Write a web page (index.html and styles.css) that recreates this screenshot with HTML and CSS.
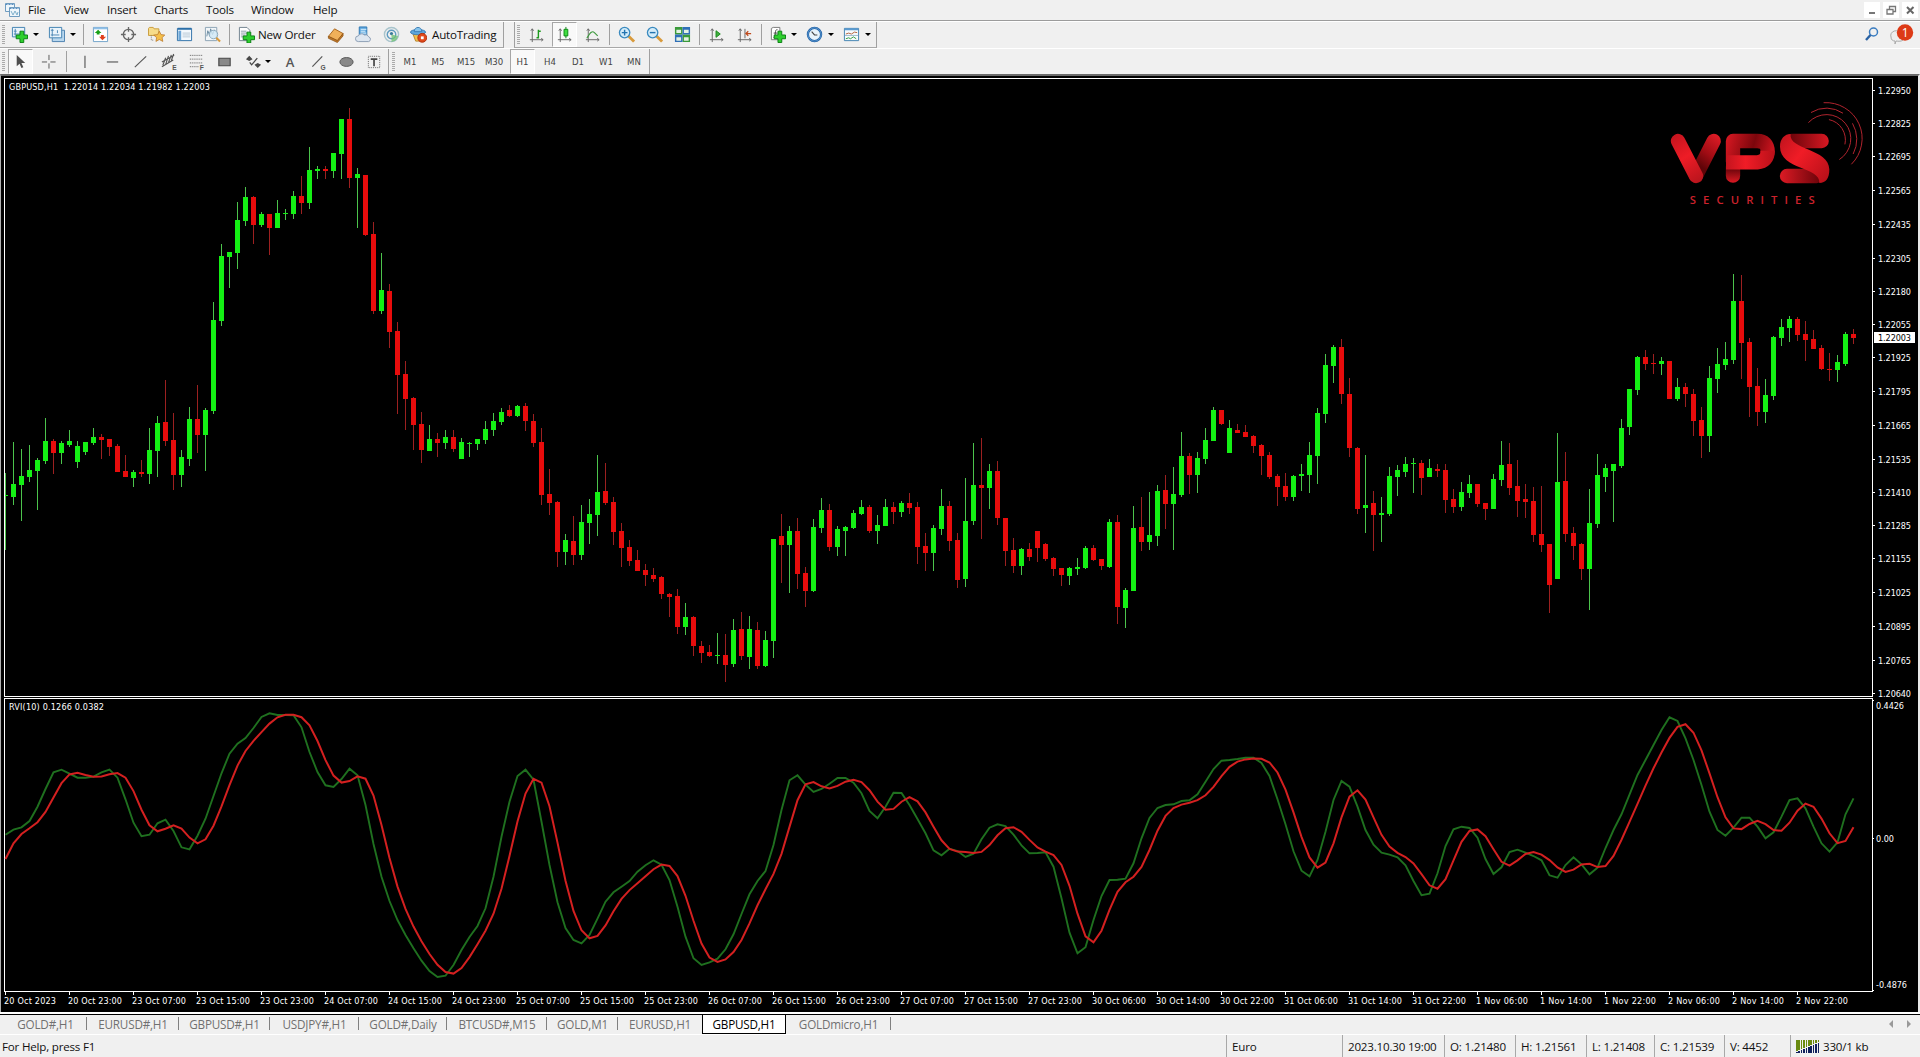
FILE: index.html
```html
<!DOCTYPE html>
<html lang="en">
<head>
  <meta charset="UTF-8">
  <title>GBPUSD,H1</title>
  <link rel="stylesheet" href="styles.css">
</head>
<body>
  <!-- Menu bar -->
  <div class="menubar">
    <svg class="app-icon" width="15" height="15" viewBox="0 0 15 15"><g fill="#eef6fb" stroke="#6f9cc0"><path d="M.5 1.500h9v8h-9z"/><path d="M4.500 5.500h10v9h-10z"/></g><path d="M.5 2.500h9M4.500 6.500h10" stroke="#5a8fc0" stroke-dasharray="2 1"/><path d="M6 9l2 4 2-4 2 4 1-3" fill="none" stroke="#7fb0cc"/></svg>
    <nav class="menu">
      <span>File</span><span>View</span><span>Insert</span><span>Charts</span><span>Tools</span><span>Window</span><span>Help</span>
    </nav>
    <div class="window-buttons">
      <span><svg width="16" height="16"><path d="M5 11h6" stroke="#777" stroke-width="2"/></svg></span>
      <span><svg width="16" height="16" fill="none" stroke="#777" stroke-width="1.300"><path d="M6.500 7V4.500h6v5H10"/><path d="M4 7.500h6v4.500H4z"/></svg></span>
      <span><svg width="16" height="16"><path d="M5 5l6.500 6.500M11.500 5L5 11.500" stroke="#666" stroke-width="2"/></svg></span>
    </div>
  </div>

  <!-- Standard + charts toolbars -->
  <div class="toolbar-row">
    <div class="toolbar">
      <i class="grip"></i>
      <span class="tool drop"><svg class="icon" viewBox="0 0 18 18"><path d="M1.500 1.500h13v10h-13z" fill="#eaf4fb" stroke="#3f7fb0"/><path d="M4.500 3v7M3 8.500h8M3 5.500h3" stroke="#4a86b4" fill="none"/><path d="M9.500 5.500h4v4h4v4h-4v4h-4v-4h-4v-4h4z" fill="#2ecf2e" stroke="#0a7d12"/></svg></span>
      <span class="tool drop"><svg class="icon" viewBox="0 0 18 18"><path d="M4.500 4.500h13v12h-13z" fill="#b9d7ee" stroke="#4a7fae"/><path d="M1.500 1.500h13v11h-13z" fill="#eaf4fb" stroke="#3f7fb0"/><path d="M4.500 3v8M3 9.500h9M3 4.500h3M10 4.500v3" stroke="#4a86b4" fill="none"/></svg></span>
      <i class="sep"></i>
      <span class="tool"><svg class="icon" viewBox="0 0 18 18"><path d="M1.500 1.500h15v15h-15z" fill="#fff" stroke="#6fa0c8"/><path d="M2 2.500h14" stroke="#8fc0e8" stroke-width="2"/><path d="M6.500 4l3.500 3.500H8V9H5V7.500H3z" fill="#18a018"/><path d="M11 15l-3.500-3.500H9.500V9.500h3v2H15z" fill="#e0401c"/></svg></span>
      <span class="tool"><svg class="icon" viewBox="0 0 18 18" fill="none" stroke="#666" stroke-width="1.400"><circle cx="9" cy="9" r="5.500"/><path d="M9 1v5M9 12v5M1 9h5M12 9h5"/></svg></span>
      <span class="tool"><svg class="icon" viewBox="0 0 18 18"><path d="M.5 2.500l1-1h4l1 1.500h5v7H.5z" fill="#f7dc8a" stroke="#c89a3a"/><path d="M3.500 10v5h3" fill="none" stroke="#777" stroke-dasharray="1 1"/><path d="M12 5.500l1.800 3.600 4 .5-2.900 2.700.8 4-3.700-2-3.600 2 .7-4-3-2.700 4.100-.5z" fill="#f5bf4a" stroke="#b8782a" stroke-width=".8"/></svg></span>
      <span class="tool"><svg class="icon" viewBox="0 0 18 18"><path d="M1.500 2.500h15v13h-15z" fill="#f4f9fd" stroke="#2c6fa8"/><path d="M2 3h14" stroke="#2c6fa8" stroke-width="2"/><path d="M4 5v10" stroke="#6fa8d8" stroke-width="3"/><path d="M7 7.500h8M7 9.500h8M7 11.500h8" stroke="#b8c8d4"/></svg></span>
      <span class="tool"><svg class="icon" viewBox="0 0 18 18"><path d="M1.500 1.500h12v14h-12z" fill="#f2f6f9" stroke="#8aa2b4"/><path d="M3 11l1-6 2 5 1-7 2 6 2-5" fill="none" stroke="#6a8aa0"/><circle cx="10" cy="9" r="4.500" fill="#cfe8f6" fill-opacity=".8" stroke="#8aa8bc"/><path d="M13 12.500l4 4" stroke="#d89a3c" stroke-width="2.200"/></svg></span>
      <i class="sep"></i>
      <span class="tool wide order"><svg class="icon" viewBox="0 0 18 18"><path d="M1.500 1.500h8l3 3v11h-11z" fill="#fff" stroke="#6f7f8c"/><path d="M3 5.500h6M3 7.500h7M3 9.500h5M3 11.500h4" stroke="#8a9aa6"/><path d="M9.500 6.500h4v4h4v4h-4v3.500h-4V14.500h-4v-4h4z" fill="#2ecf2e" stroke="#0a7d12"/></svg>New Order</span>
      <span class="tool"><svg class="icon" viewBox="0 0 18 18"><path d="M1.500 11L8 3l9 5-6 7.500z" fill="#f0b05a" stroke="#a8641c"/><path d="M1.500 11l9.500 4.500 6-7.500v2.500l-6 7-9.500-4.500z" fill="#c67a28" stroke="#8c5214" stroke-width=".8"/></svg></span>
      <span class="tool"><svg class="icon" viewBox="0 0 18 18"><path d="M4.500 1h8v9h-8z" fill="#5aa6de" stroke="#2f78b4"/><path d="M6 3.500h6M6 5.500h5M6 7.500h6" stroke="#e6f4ff"/><path d="M3.500 16.500a3 3 0 0 1 0-6 4 4 0 0 1 6.500-1 3.500 3.500 0 0 1 4.500 2 2.600 2.600 0 0 1 0 5z" fill="#dde6f0" stroke="#8a9cb4"/></svg></span>
      <span class="tool"><svg class="icon" viewBox="0 0 18 18" fill="none"><circle cx="9" cy="9" r="7.500" stroke="#a8c4cc" stroke-width="1.500"/><circle cx="9" cy="9" r="4.500" stroke="#5f9cc0" stroke-width="1.500"/><circle cx="9" cy="8" r="1.700" fill="#3a7a9c"/><path d="M9 9v8l4-1.500a8 8 0 0 0 3-5" fill="#6cc070" fill-opacity=".75"/></svg></span>
      <span class="tool wide auto"><svg class="icon" viewBox="0 0 18 18"><path d="M3 8h11l-2 8H6z" fill="#f3c24c" stroke="#b8842a"/><ellipse cx="8.500" cy="6.500" rx="8" ry="2.800" fill="#5fa8dc" stroke="#3a7cb4"/><path d="M4.500 6c0-6 8-6 8 0z" fill="#86c4ec" stroke="#3a7cb4"/><circle cx="13" cy="12.500" r="4.700" fill="#e04a1c" stroke="#b0300c"/><path d="M11.500 11h3v3h-3z" fill="#fff"/></svg>AutoTrading</span>
    </div>
    <div class="toolbar second">
      <i class="grip"></i>
      <span class="tool"><svg class="icon" viewBox="0 0 18 18" fill="none"><path class="axes" d="M4.500 3v14M2 14.500h14M3 5l1.500-2L6 5M14 13l2 1.500-2 1.500"/><path d="M9 12.500h2V4M11 5.500h2.500" stroke="#1e9a1e" stroke-width="1.500"/></svg></span>
      <span class="tool pressed"><svg class="icon" viewBox="0 0 18 18" fill="none"><path class="axes" d="M4.500 3v14M2 14.500h14M3 5l1.500-2L6 5M14 13l2 1.500-2 1.500"/><path d="M10.500 1v12" stroke="#0a7d12"/><path d="M8.500 3.500h4v7h-4z" fill="#3fdc3f" stroke="#0a8a12"/></svg></span>
      <span class="tool"><svg class="icon" viewBox="0 0 18 18" fill="none"><path class="axes" d="M4.500 3v14M2 14.500h14M3 5l1.500-2L6 5M14 13l2 1.500-2 1.500"/><path d="M3 13c4-7 6-8 8-6l3.500 3.500" stroke="#3f9a3f" stroke-width="1.200"/></svg></span>
      <i class="sep"></i>
      <span class="tool"><svg class="icon" viewBox="0 0 18 18"><path d="M11 10.500l6 6" stroke="#d89a3c" stroke-width="3"/><circle cx="7" cy="7" r="5.500" fill="#d4ecf9" stroke="#3a8abf" stroke-width="1.400"/><path d="M4 7h6M7 4v6" stroke="#2374b0" stroke-width="1.500"/></svg></span>
      <span class="tool"><svg class="icon" viewBox="0 0 18 18"><path d="M11 10.500l6 6" stroke="#d89a3c" stroke-width="3"/><circle cx="7" cy="7" r="5.500" fill="#d4ecf9" stroke="#3a8abf" stroke-width="1.400"/><path d="M4 7h6" stroke="#2374b0" stroke-width="1.500"/></svg></span>
      <span class="tool"><svg class="icon" viewBox="0 0 18 18"><path d="M1 1h8v8H1zM9 9h8v8H9z" fill="#3a9a3a"/><path d="M9 1h8v8H9zM1 9h8v8H1z" fill="#2f6fb8"/><path d="M2.500 4h5v3.500h-5zM10.500 4h5v3.500h-5zM2.500 12h5v3.500h-5zM10.500 12h5v3.500h-5z" fill="#e4f2e4"/></svg></span>
      <i class="sep"></i>
      <span class="tool"><svg class="icon" viewBox="0 0 18 18" fill="none"><path class="axes" d="M4.500 3v14M2 14.500h14M3 5l1.500-2L6 5M14 13l2 1.500-2 1.500"/><path d="M8.500 5v7l4.500-3.500z" fill="#3fae3f" stroke="#1c8a1c"/></svg></span>
      <span class="tool"><svg class="icon" viewBox="0 0 18 18" fill="none"><path class="axes" d="M4.500 3v14M2 14.500h14M3 5l1.500-2L6 5M14 13l2 1.500-2 1.500M9.500 3v10"/><path d="M16 8h-5M13 5.500L10.500 8l2.500 2.500" stroke="#c04a1c" stroke-width="1.300"/></svg></span>
      <i class="sep"></i>
      <span class="tool drop"><svg class="icon" viewBox="0 0 18 18"><path d="M2.500 2.500l2-1h7v13h-9z" fill="#fff" stroke="#777"/><path d="M9 4c-2-.5-2 1-2.300 4s-.4 4-2 4M5 7.500h4" fill="none" stroke="#444"/><path d="M9.500 5.500h4v4h4v4h-4v4h-4v-4h-4v-4h4z" fill="#2ecf2e" stroke="#0a7d12"/></svg></span>
      <span class="tool drop"><svg class="icon" viewBox="0 0 18 18"><circle cx="9" cy="9" r="7" fill="#e8f3fb" stroke="#2565a8" stroke-width="2.400"/><circle cx="9" cy="9" r="7" fill="none" stroke="#6fa8dc" stroke-width=".7"/><path d="M6 6l3 3.500h3" fill="none" stroke="#444" stroke-width="1.200"/></svg></span>
      <span class="tool drop"><svg class="icon" viewBox="0 0 18 18"><path d="M1.500 2.500h15v13h-15z" fill="#f6fafd" stroke="#3f7fb0"/><path d="M2 3.500h14" stroke="#5a9ad0" stroke-width="2"/><path d="M3 8.500l3-1 3 1 3-2 3 .5" fill="none" stroke="#b0603c"/><path d="M2 10h14" stroke="#9ab8cc"/><path d="M3 13.500l3-1 2 1 3-2 3 2" fill="none" stroke="#2c9a3c"/></svg></span>
    </div>
    <div class="notice">
      <svg width="16" height="16" viewBox="0 0 16 16" fill="none"><circle cx="9.500" cy="6" r="4" stroke="#3a7cc0" stroke-width="1.500"/><path d="M6.500 9l-4.500 5" stroke="#2a62a4" stroke-width="2.400"/></svg>
      <svg width="26" height="22" viewBox="0 0 26 22"><path d="M3 13a5 4.500 0 0 1 10-3l2 6c-2 2-6 1-7 1l-1 3v-3c-2 0-4-1-4-4z" fill="#eee" stroke="#aaa"/><circle cx="17" cy="8.500" r="8.200" fill="#dd3a16"/><text x="17" y="13" text-anchor="middle" class="badge">1</text></svg>
    </div>
  </div>

  <!-- Line studies + periodicity toolbars -->
  <div class="toolbar-row lower">
    <div class="toolbar">
      <i class="grip"></i>
      <span class="tool pressed"><svg class="icon" viewBox="0 0 18 18"><path d="M5 2v12l3-2.500 2 4.500 2-1-2-4.300h4z" fill="#505050"/></svg></span>
      <span class="tool"><svg class="icon" viewBox="0 0 18 18"><path d="M9.500 2v5.500M9.500 11v5.500M2 9.500h5.500M11 9.500h5.500" stroke="#555"/></svg></span>
      <i class="sep tall"></i>
      <span class="tool"><svg class="icon" viewBox="0 0 18 18"><path d="M9.500 3v13" stroke="#555" stroke-width="1.200"/></svg></span>
      <span class="tool"><svg class="icon" viewBox="0 0 18 18"><path d="M3 9.500h12" stroke="#555" stroke-width="1.200"/></svg></span>
      <span class="tool"><svg class="icon" viewBox="0 0 18 18"><path d="M3 15L15 3.500" stroke="#555" stroke-width="1.200"/></svg></span>
      <span class="tool"><svg class="icon" viewBox="0 0 18 18"><path d="M2 9.500L15 2.500M2 14.500l12-7M3 13l3-8M6 12l3-9M9 10l3-8M12 8l2.500-7" stroke="#555" stroke-width="1.200"/><text x="13" y="17.500" class="mark">E</text></svg></span>
      <span class="tool"><svg class="icon" viewBox="0 0 18 18"><path d="M2 2.500h14M2 6.500h14M2 10.500h14M2 14.500h9" stroke="#555" stroke-dasharray="1 1"/><text x="12.500" y="17.500" class="mark">F</text></svg></span>
      <span class="tool"><svg class="icon" viewBox="0 0 18 18"><path d="M3 5.500h12v8H3z" fill="#888" stroke="#484848" stroke-width="1.200"/></svg></span>
      <span class="tool drop shapes"><svg class="icon" viewBox="0 0 18 18"><path d="M4.500 3l3.500 3.500-3.500 2L1 6.500zM13.500 16L10 12.500l3.500-2 3.500 2z" fill="#484848"/><path d="M5 10l2 2.500 6-7" fill="none" stroke="#484848" stroke-width="1.400"/></svg></span>
      <span class="tool letter">A</span>
      <span class="tool"><svg class="icon" viewBox="0 0 18 18"><path d="M2.500 14.500L13 3.500" stroke="#555" stroke-width="1.200"/><text x="11" y="17.500" class="mark">G</text></svg></span>
      <span class="tool"><svg class="icon" viewBox="0 0 18 18"><ellipse cx="9" cy="9.500" rx="7" ry="4.700" fill="#888" stroke="#555"/></svg></span>
      <span class="tool"><svg class="icon" viewBox="0 0 18 18"><path d="M2.500 3.500h12v12h-12z" fill="none" stroke="#666" stroke-dasharray="1 1"/><path d="M5 6.500h7M8.500 6.500V14" stroke="#444" stroke-width="1.800"/></svg></span>
    </div>
    <div class="toolbar periods">
      <i class="grip"></i>
      <span class="tool">M1</span><span class="tool">M5</span><span class="tool">M15</span><span class="tool">M30</span><span class="tool pressed">H1</span><span class="tool">H4</span><span class="tool">D1</span><span class="tool">W1</span><span class="tool">MN</span>
    </div>
  </div>

  <!-- Chart window -->
  <div class="chart-window">
    <svg class="chart" width="1916" height="936" viewBox="2 76 1916 936">
      <g id="frames" class="frame">
        <path d="M4.500 696.500v-618h1868v618z"/>
        <path d="M4.500 991.500v-293h1868v293z"/>
      </g>
      <text x="9" y="90" class="label" textLength="201" xml:space="preserve">GBPUSD,H1  1.22014 1.22034 1.21982 1.22003</text>
      <text x="9" y="710" class="label" textLength="95">RVI(10) 0.1266 0.0382</text>
      <g id="candles" shape-rendering="crispEdges"></g>
      <g id="rvi" fill="none"></g>
      <g id="scales"></g>
    </svg>
    <svg class="logo" width="194" height="107" viewBox="330 300 582 321">
      <defs>
        <linearGradient id="leg" gradientUnits="userSpaceOnUse" x1="340" y1="405" x2="430" y2="545"><stop offset="0" stop-color="#c4141e"/><stop offset=".45" stop-color="#ee1c26"/><stop offset="1" stop-color="#b5141c"/></linearGradient>
        <linearGradient id="legDark" gradientUnits="userSpaceOnUse" x1="475" y1="405" x2="410" y2="490"><stop offset="0" stop-color="#e01c26"/><stop offset=".6" stop-color="#a00c14"/><stop offset="1" stop-color="#600408"/></linearGradient>
        <linearGradient id="bowl" gradientUnits="userSpaceOnUse" x1="500" y1="400" x2="640" y2="440"><stop offset="0" stop-color="#d81822"/><stop offset=".6" stop-color="#7c060c"/><stop offset="1" stop-color="#c8141e"/></linearGradient>
        <linearGradient id="band" gradientUnits="userSpaceOnUse" x1="498" y1="0" x2="645" y2="0"><stop offset="0" stop-color="#c4141e"/><stop offset=".4" stop-color="#f01c26"/><stop offset="1" stop-color="#b81019"/></linearGradient>
        <linearGradient id="curl" gradientUnits="userSpaceOnUse" x1="660" y1="420" x2="808" y2="530"><stop offset="0" stop-color="#c4141e"/><stop offset=".4" stop-color="#f01c26"/><stop offset="1" stop-color="#b81019"/></linearGradient>
        <linearGradient id="stem" gradientUnits="userSpaceOnUse" x1="0" y1="508" x2="0" y2="550"><stop offset="0" stop-color="#70060c"/><stop offset="1" stop-color="#e01a24"/></linearGradient>
        <linearGradient id="barTop" gradientUnits="userSpaceOnUse" x1="690" y1="0" x2="806" y2="0"><stop offset="0" stop-color="#6c040a"/><stop offset="1" stop-color="#d81822"/></linearGradient>
        <linearGradient id="barLow" gradientUnits="userSpaceOnUse" x1="660" y1="0" x2="780" y2="0"><stop offset="0" stop-color="#dc1a24"/><stop offset="1" stop-color="#6c040a"/></linearGradient>
      </defs>
      <g fill="none" stroke-width="43" stroke-linecap="round">
        <path d="M461 423L408 527" stroke="url(#legDark)"/>
        <path d="M354 423L408 528" stroke="url(#leg)"/>
        <path d="M519 500V527" stroke="url(#stem)"/>
        <path d="M519 485V423H592Q623 423 623 455" stroke="url(#bowl)" stroke-linejoin="round"/>
        <path d="M498 487H592Q623 485 623 452" stroke="url(#band)" stroke-linecap="butt"/>
        <path d="M695 423H785" stroke="url(#barTop)"/>
        <path d="M681 528H770" stroke="url(#barLow)"/>
      </g>
      <path d="M692 402C684 450 808 445 808 508C808 535 798 549 778 549C783 500 660 510 660 440C660 416 674 402 692 402z" fill="url(#curl)"/>
      <g fill="none" stroke="#b0242e" stroke-width="3" stroke-linecap="round">
        <path d="M792 308A108 108 0 0 1 875 492"/>
        <path d="M754 337A86 86 0 0 1 848 339"/>
        <path d="M878 371A93 93 0 0 1 880 461"/>
        <path d="M746 367A73 73 0 1 1 839 478"/>
        <path d="M808 359A61 61 0 0 1 855 432"/>
      </g>
      <text x="389" y="612" textLength="375" class="logo-text">SECURITIES</text>
    </svg>
  </div>

  <!-- Chart tabs -->
  <div class="tabs">
    <span>GOLD#,H1</span><span>EURUSD#,H1</span><span>GBPUSD#,H1</span><span>USDJPY#,H1</span><span>GOLD#,Daily</span><span>BTCUSD#,M15</span><span>GOLD,M1</span><span class="plain">EURUSD,H1</span><span class="active">GBPUSD,H1</span><span>GOLDmicro,H1</span>
    <svg class="tab-arrows" width="26" height="10"><path d="M6 1v8L2 5zM20 1v8l4-4z" fill="#999"/></svg>
  </div>

  <!-- Status bar -->
  <div class="statusbar">
    <span class="help">For Help, press F1</span>
    <span>Euro</span><span>2023.10.30 19:00</span><span>O: 1.21480</span><span>H: 1.21561</span><span>L: 1.21408</span><span>C: 1.21539</span><span>V: 4452</span>
    <span class="traffic"><svg width="24" height="14" id="traffic" shape-rendering="crispEdges"></svg>330/1 kb</span>
  </div>

  <script src="chart.js"></script>
</body>
</html>
```

FILE: styles.css
```css
body {
  margin: 0;
  width: 1920px;
  height: 1057px;
  overflow: hidden;
  display: flex;
  flex-direction: column;
  background: #f0f0f0;
  font-family: "Open Sans", "Noto Sans", sans-serif;
  font-size: 11.6px;
  letter-spacing: -0.2px;
  color: #111;
}

/* Menu bar */
.menubar {
  box-sizing: border-box;
  height: 21px;
  flex: none;
  display: flex;
  border-bottom: 1px solid #9c9c9c;
}

.app-icon {
  margin: 2px 8px 0 5px;
}

.menu {
  display: grid;
  grid-template-columns: 36px 43px 47px 52px 45px 62px 60px;
  line-height: 19px;
}

.window-buttons {
  margin-left: auto;
  padding: 2px 2px 0 0;
  display: flex;
  gap: 3px;
}

.window-buttons span {
  width: 16px;
  height: 16px;
  background: #fff;
}

/* Toolbars */
.toolbar-row {
  box-sizing: border-box;
  height: 27px;
  flex: none;
  display: flex;
  border-top: 1px solid #fff;
}

.toolbar {
  box-sizing: border-box;
  display: flex;
  align-items: center;
  border-right: 1px solid #a0a0a0;
  border-bottom: 1px solid #a8a8a8;
}

.toolbar:first-child {
  width: 504px;
}

.toolbar.second {
  width: 363px;
  margin-left: 10px;
  border-left: 1px solid #a0a0a0;
}

.grip {
  flex: none;
  width: 3px;
  height: 19px;
  margin: 0 1px 0 2px;
  background: repeating-linear-gradient(#aaa 0 1px, #f0f0f0 1px 2px);
}

.second .grip {
  margin: 0 2px;
}

.tool {
  box-sizing: border-box;
  flex: none;
  width: 28px;
  height: 25px;
  display: flex;
  align-items: center;
  justify-content: center;
}

.icon {
  flex: none;
  width: 17px;
  height: 17px;
}

.axes {
  stroke: #666;
}

.tool.drop {
  width: 37px;
  justify-content: flex-start;
  padding-left: 5px;
  gap: 5px;
}

.tool.drop::after {
  content: "";
  border: 3px solid transparent;
  border-top-color: #000;
  border-bottom: 0;
}

.tool.shapes {
  width: 38px;
  padding-left: 7px;
  gap: 3px;
}

.tool.wide {
  justify-content: flex-start;
}

.tool.order {
  width: 89px;
  padding-left: 6px;
  gap: 3px;
}

.tool.auto {
  width: 97px;
  padding-left: 5px;
  gap: 5px;
}

.pressed {
  width: 25px;
  margin: 0 1px 0 2px;
  background: #f9f9f9;
  border: 1px solid #a6a6a6;
  border-right-color: #fff;
  border-bottom-color: #fff;
}

.sep {
  flex: none;
  width: 1px;
  height: 21px;
  margin: 0 2px 0 3px;
  background: #a0a0a0;
}

.sep.tall {
  margin: 0 3px 0 4px;
}

.notice {
  margin-left: auto;
  display: flex;
  gap: 8px;
  padding: 4px 6px 0 0;
}

.notice svg:last-child {
  margin-top: -2px;
}

.badge {
  font-size: 12px;
  fill: #fff;
}

.lower {
  height: 26px;
}

.lower .toolbar {
  border-bottom: 0;
}

.lower .toolbar:first-child {
  width: 389px;
}

.mark {
  font: 700 7px "Liberation Sans", sans-serif;
  fill: #555;
}

.letter {
  font-size: 13px;
  font-weight: 600;
  color: #555;
}

.periods {
  width: 261px;
  font: 9.5px "DejaVu Sans Condensed", "DejaVu Sans", sans-serif;
  letter-spacing: 0;
  color: #444;
}

.periods .grip {
  margin: 0 1px 0 3px;
}

/* Chart window */
.chart-window {
  position: relative;
  box-sizing: border-box;
  height: 938px;
  flex: none;
  padding: 0 0 0 2px;
  background: #000;
  border-top: 2px solid #6a6a6a;
  border-left: 1px solid #b0b0b0;
  border-right: 2px solid #e8e8e8;
}

.chart {
  display: block;
  margin-left: -1px;
}

.frame {
  fill: none;
  stroke: #fff;
  shape-rendering: crispEdges;
}

.label {
  font: 9px "DejaVu Sans Condensed", "DejaVu Sans", sans-serif;
  letter-spacing: 0;
  fill: #fff;
}

.label.dark {
  fill: #000;
}

.up {
  fill: #14f014;
}

.up-wick {
  fill: #4cc44c;
}

.down {
  fill: #e80c0c;
}

.down-wick {
  fill: #9c2020;
}

.rvi-main {
  stroke: #1f701f;
  stroke-width: 1.9;
}

.rvi-signal {
  stroke: #d42020;
  stroke-width: 2;
}

/* Broker logo lies over the plot */
.logo {
  position: absolute;
  left: 1669px;
  top: 24px;
}

.logo-text {
  font: 600 34px "Open Sans", sans-serif;
  fill: #cc222c;
}

/* Tabs */
.tabs {
  box-sizing: border-box;
  height: 22px;
  flex: none;
  display: grid;
  grid-template-columns: 83px 92px 91px 89px 88px 100px 71px 84px 84px 105px 1fr;
  padding-left: 4px;
  border-top: 1px solid #fff;
  font-size: 11.7px;
  line-height: 18px;
  color: #707070;
  background: linear-gradient(#fff 0 1px, #000 1px 2px, #f0f0f0 2px);
  text-align: center;
}

.tabs span {
  margin-top: 2px;
  height: 18px;
  background: linear-gradient(#808080, #808080) right 2px / 1px 13px no-repeat;
}

.tabs .plain {
  background: none;
}

.tabs .active {
  box-sizing: border-box;
  height: 19px;
  border: 1px solid #000;
  border-top: 0;
  background: #fff;
  color: #000;
}

.tab-arrows {
  justify-self: end;
  margin: 6px 7px 0 0;
}

/* Status bar */
.statusbar {
  box-sizing: border-box;
  flex: 1;
  display: grid;
  grid-template-columns: 1226px 116px 102px 71px 71px 68px 70px 66px 130px;
  border-top: 1px solid #fff;
  line-height: 23px;
}

.statusbar span {
  padding-left: 5px;
  border-left: 1px solid #a8a8a8;
}

.statusbar .help {
  padding-left: 2px;
  border-left: 0;
}

.statusbar .traffic {
  display: flex;
  align-items: center;
  gap: 3px;
}
```

FILE: chart.js
```js
const SVG = 'http://www.w3.org/2000/svg';

const add = (parent, tag, attrs, text) => {
  const el = document.createElementNS(SVG, tag);
  for (const key in attrs) el.setAttribute(key, attrs[key]);
  if (text) el.textContent = text;
  parent.appendChild(el);
};

const STEP = 8;      // distance between bars
const FIRST_X = 5;   // first bar

// direction, high, body top, body bottom, low
const candles = `
G473,495,496,550 G442,484,497,505 G449,476,485,521 G445,470,477,482 G458,460,471,510 G418,441,461,464 R439,441,453,474 G441,443,453,464
G430,441,445,447 G441,446,462,468 G442,442,452,455 G428,437,443,445 R434,437,440,459 R439,439,447,456 R444,446,472,472 R455,471,477,477
G470,472,478,487 R460,472,474,477 G428,450,474,484 G416,423,451,477 R380,422,441,446 R413,440,475,490 G450,457,475,487 G407,419,459,466
R385,419,435,453 G408,410,435,471 G302,320,411,414 G244,256,321,326 G252,252,257,288 G202,220,253,269 G187,197,221,226 R196,197,225,244
G212,214,225,227 R214,214,228,255 G200,213,228,228 G209,213,214,220 G191,196,214,219 R176,196,203,214 G147,170,203,209 G166,169,171,179
R166,169,171,179 G153,153,171,178 G119,119,154,179 R108,119,178,188 G168,174,178,228 R175,175,235,236 R222,234,311,314 G253,290,311,314
R284,291,332,348 R322,331,375,414 R361,374,399,430 R397,398,425,450 R412,424,450,463 G425,439,451,451 R433,439,443,457 G430,437,443,449
R430,437,449,452 G438,442,459,459 G442,443,444,457 G439,439,444,450 G421,429,440,444 G413,421,430,436 G408,412,422,425 R405,410,416,417
G405,406,416,417 R403,406,421,431 R414,421,443,447 R428,442,495,505 R469,494,503,515 R501,502,552,567 G534,540,552,565 R516,541,555,565
G505,522,555,560 G499,514,523,544 G455,492,515,536 R463,491,503,505 R497,502,532,545 R523,531,548,567 R540,547,561,566 R550,560,571,571
R564,570,575,586 R568,575,579,582 R576,577,594,599 R593,594,597,617 R589,596,627,634 G603,617,627,635 R616,617,646,656 R641,646,653,663
R645,652,656,657 G633,655,656,664 R634,655,665,682 G619,630,664,667 R612,629,656,660 G616,629,657,669 R622,630,666,669 G631,640,666,667
G539,539,641,658 R514,536,545,583 G526,531,545,593 R518,531,574,589 R567,573,591,607 G519,527,591,592 G498,510,528,533 R504,510,547,551
G526,529,547,556 G526,527,531,556 G510,513,528,529 G500,507,514,515 R505,507,531,533 G515,525,531,544 G499,507,526,526 R502,507,512,524
G501,503,512,517 R493,503,508,514 R502,507,547,564 R533,546,553,571 G525,528,553,571 G489,506,529,535 R501,506,541,551 R533,540,580,588
G478,521,579,587 G443,485,521,525 R438,485,488,539 G464,471,488,509 R461,471,518,525 R518,518,551,566 R538,550,566,573 G548,549,566,575
R543,549,557,561 R531,531,548,562 R543,544,559,561 R557,558,569,576 R568,568,575,586 G567,568,576,585 G558,567,569,575 G546,548,568,569
R545,548,560,561 R559,559,566,570 G519,522,567,568 R515,522,607,624 G588,590,608,628 G506,528,591,591 R497,527,542,551 G492,535,542,550
G485,491,536,546 R475,490,504,529 G467,494,504,550 G432,456,495,497 R453,456,475,494 G452,458,475,493 G428,440,459,464 G407,410,441,441
R410,410,424,425 G420,428,453,453 R424,430,433,433 R425,432,437,437 R435,436,446,453 R444,445,456,475 R452,455,477,479 R474,476,487,506
R473,486,497,501 G475,476,497,501 G464,474,476,491 G442,455,475,493 G408,413,456,484 G354,365,414,423 G345,347,366,383 R339,347,394,404
R378,394,448,457 R447,448,509,514 G455,505,508,533 R491,503,515,551 G497,513,515,542 G467,476,514,516 G465,470,477,496 G457,464,472,477
G458,463,464,493 R460,463,478,495 G459,468,477,477 R464,469,471,477 R464,470,500,513 R489,499,507,513 G482,492,507,511 G475,484,493,498
R484,484,504,507 R503,503,509,520 G474,479,509,509 G441,465,480,486 R443,464,488,495 R460,486,501,517 R484,499,502,518 R487,501,535,542
R486,534,545,552 R544,544,585,613 G433,482,579,579 R452,481,534,542 R527,533,546,560 R543,544,569,580 G489,523,569,610 G454,475,524,528
G464,468,477,492 G464,464,471,522 G419,428,466,468 G389,389,427,435 G356,357,390,395 R350,357,364,370 R354,363,364,374 G357,361,364,375
R361,361,399,399 G378,387,399,401 R383,387,394,407 R389,394,421,436 R407,420,436,458 G366,378,436,452 G348,364,379,393 G342,359,365,370
G274,301,360,364 R275,301,343,379 R338,342,387,417 R368,386,412,426 G379,395,412,423 G336,337,396,400 G319,327,338,346 G316,319,328,342
R317,319,335,341 R321,334,340,361 R330,339,349,349 R345,348,369,370 R353,369,370,381 G355,362,370,382 G332,334,364,366 R329,334,338,344
`.trim().split(/\s+/);

const candleLayer = document.getElementById('candles');
candles.forEach((bar, i) => {
  const kind = bar[0] === 'G' ? 'up' : 'down';
  const [high, top, bottom, low] = bar.slice(1).split(',').map(Number);
  const x = FIRST_X + i * STEP;
  const left = i === 0 ? x : x - 2;
  add(candleLayer, 'rect', { x, y: high, width: 1, height: low - high, class: kind + '-wick' });
  add(candleLayer, 'rect', { x: left, y: top, width: x + 3 - left, height: bottom - top, class: kind });
});

// RVI samples, in thirds of a pixel below y = 690
const rvi = [
  434, 419, 412, 393, 350, 297, 247, 239, 251, 263, 263, 260, 247, 239, 263, 328, 398, 439, 434, 400,
  389, 423, 472, 478, 437, 386, 318, 250, 191, 161, 144, 114, 81, 70, 75, 75, 76, 112, 186, 246,
  286, 291, 267, 236, 256, 345, 462, 560, 633, 690, 735, 775, 812, 843, 861, 857, 825, 780, 741, 708,
  655, 560, 440, 335, 258, 239, 269, 395, 525, 637, 714, 750, 760, 735, 686, 635, 607, 590, 573, 545,
  526, 511, 524, 570, 650, 740, 805, 825, 817, 806, 778, 733, 672, 613, 573, 543, 465, 360, 271, 256,
  284, 306, 297, 281, 264, 264, 278, 310, 363, 385, 350, 308, 309, 345, 387, 430, 481, 496, 476, 483,
  501, 491, 448, 413, 403, 408, 434, 466, 490, 489, 487, 530, 625, 728, 790, 772, 690, 618, 570, 569,
  566, 520, 445, 384, 354, 345, 343, 333, 331, 313, 275, 237, 212, 210, 207, 203, 203, 219, 258, 328,
  403, 484, 542, 559, 510, 425, 330, 273, 290, 350, 420, 464, 488, 494, 502, 526, 573, 616, 611, 550,
  468, 418, 410, 414, 443, 507, 552, 532, 486, 479, 488, 498, 511, 556, 563, 525, 502, 523, 553, 533,
  474, 420, 373, 314, 255, 210, 165, 120, 82, 93, 145, 210, 285, 365, 420, 437, 413, 383, 383, 410,
  445, 427, 380, 330, 325, 355, 410, 460, 485, 457, 373, 325
];

// Signal line: symmetric weighted average of the last four values
const signal = rvi.map((v, i) =>
  i < 3 ? [507, 460, 432][i] : (v + 2 * rvi[i - 1] + 2 * rvi[i - 2] + rvi[i - 3]) / 6);

const points = values => values.map((v, i) => `${FIRST_X + 0.5 + i * STEP},${(690 + v / 3).toFixed(1)}`).join(' ');
const rviLayer = document.getElementById('rvi');
add(rviLayer, 'polyline', { points: points(rvi), class: 'rvi-main' });
add(rviLayer, 'polyline', { points: points(signal), class: 'rvi-signal' });

// Price scale
const scales = document.getElementById('scales');
const tick = (x, y, width, height) =>
  add(scales, 'rect', { x, y, width, height, fill: '#fff', 'shape-rendering': 'crispEdges' });

const prices = {
  '1.22950': 90, '1.22825': 123, '1.22695': 156, '1.22565': 190, '1.22435': 224, '1.22305': 258,
  '1.22180': 291, '1.22055': 324, '1.21925': 357, '1.21795': 391, '1.21665': 425, '1.21535': 459,
  '1.21410': 492, '1.21285': 525, '1.21155': 558, '1.21025': 592, '1.20895': 626, '1.20765': 660, '1.20640': 693
};
for (const price in prices) {
  const y = prices[price];
  tick(1873, y, 2, 1);
  add(scales, 'text', { x: 1878, y: y + 4, textLength: 33, class: 'label' }, price);
}
tick(1874, 332, 41, 11);
add(scales, 'text', { x: 1878, y: 341, textLength: 33, class: 'label dark' }, '1.22003');

tick(1873, 700, 1, 1);
tick(1873, 838, 1, 1);
tick(1873, 990, 1, 1);
add(scales, 'text', { x: 1876, y: 709, textLength: 28, class: 'label' }, '0.4426');
add(scales, 'text', { x: 1876, y: 842, textLength: 18, class: 'label' }, '0.00');
add(scales, 'text', { x: 1876, y: 988, textLength: 31, class: 'label' }, '-0.4876');

// Time scale
const times = [
  '20 Oct 2023', '20 Oct 23:00', '23 Oct 07:00', '23 Oct 15:00', '23 Oct 23:00', '24 Oct 07:00', '24 Oct 15:00',
  '24 Oct 23:00', '25 Oct 07:00', '25 Oct 15:00', '25 Oct 23:00', '26 Oct 07:00', '26 Oct 15:00', '26 Oct 23:00',
  '27 Oct 07:00', '27 Oct 15:00', '27 Oct 23:00', '30 Oct 06:00', '30 Oct 14:00', '30 Oct 22:00', '31 Oct 06:00',
  '31 Oct 14:00', '31 Oct 22:00', '1 Nov 06:00', '1 Nov 14:00', '1 Nov 22:00', '2 Nov 06:00', '2 Nov 14:00', '2 Nov 22:00'
];
times.forEach((time, i) => {
  const x = FIRST_X + i * 64;
  tick(x, 992, 1, 3);
  add(scales, 'text', { x: x - 1, y: 1004, textLength: time.length === 12 ? 54 : 52, class: 'label' }, time);
});

// Connection bars
const traffic = document.getElementById('traffic');
for (let i = 0; i < 10; i++) {
  const h = 1 + i;
  add(traffic, 'rect', { x: i * 2.4, y: 0, width: 1.5, height: 12 - h, fill: '#6a8a10' });
  add(traffic, 'rect', { x: i * 2.4, y: 13 - h, width: 1.5, height: h, fill: '#10205c' });
}
```
